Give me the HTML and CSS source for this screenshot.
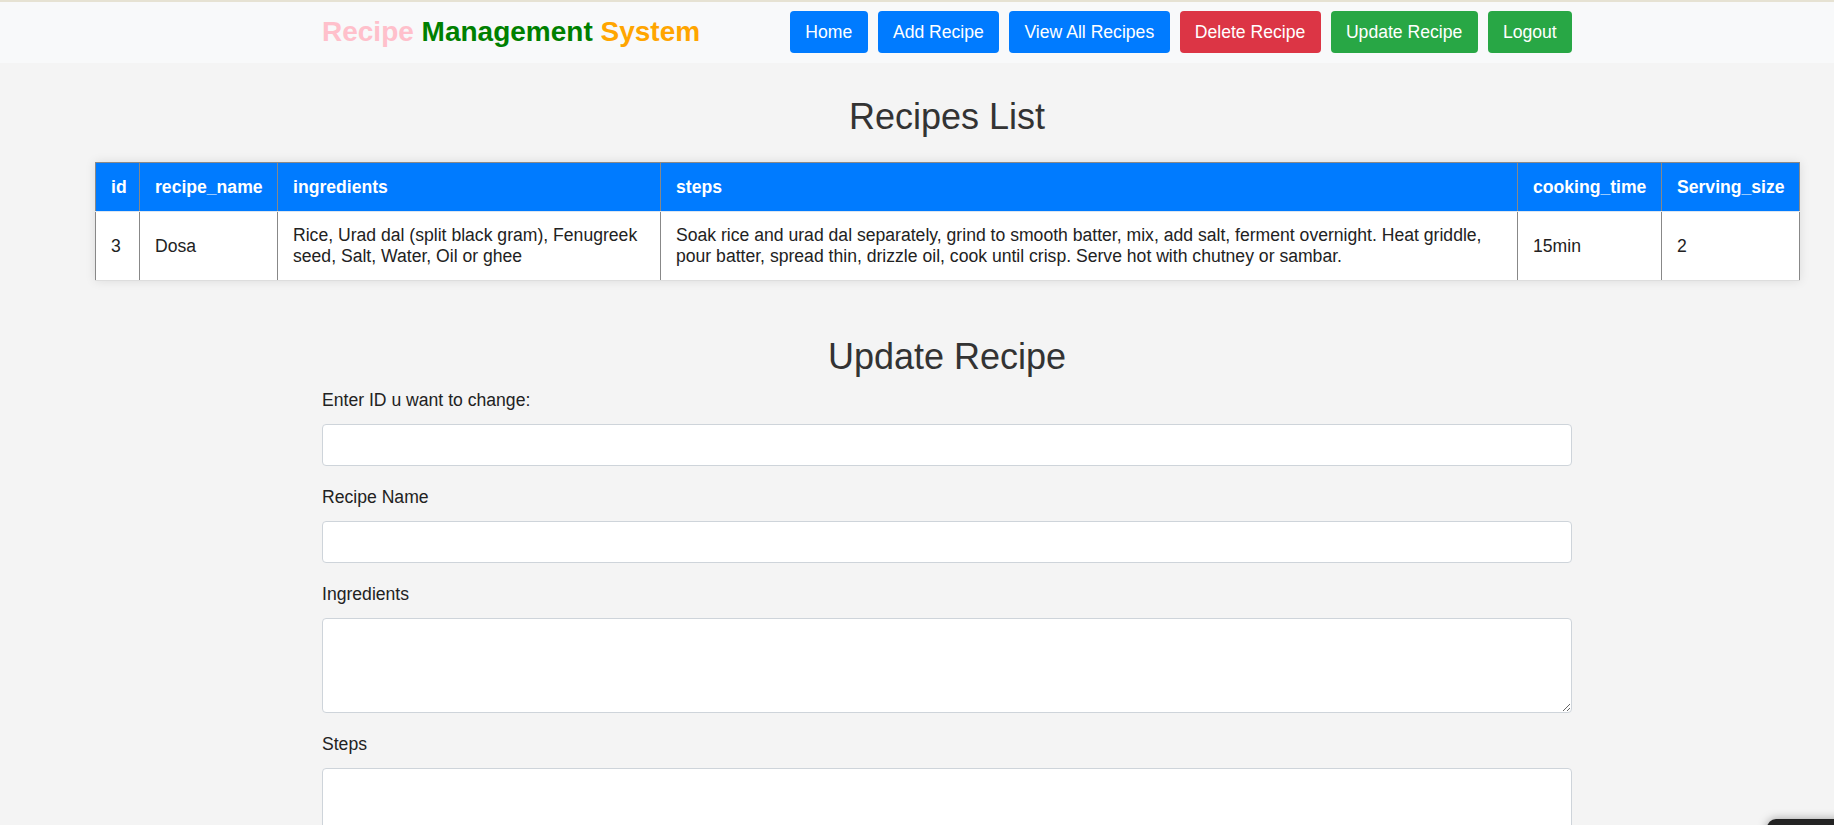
FILE: index.html
```html
<!DOCTYPE html>
<html lang="en">
<head>
<meta charset="utf-8">
<title>Update Recipe</title>
<link rel="stylesheet" href="styles.css">
</head>
<body>
<div class="page">
  <header class="topbar">
    <div class="container topbar-inner">
      <h3 class="brand"><span class="b-pink">Recipe</span> <span class="b-green">Management</span> <span class="b-orange">System</span></h3>
      <nav class="nav">
        <a class="btn btn-blue" href="#">Home</a>
        <a class="btn btn-blue" href="#">Add Recipe</a>
        <a class="btn btn-blue" href="#">View All Recipes</a>
        <a class="btn btn-red" href="#">Delete Recipe</a>
        <a class="btn btn-green" href="#">Update Recipe</a>
        <a class="btn btn-green" href="#">Logout</a>
      </nav>
    </div>
  </header>

  <h2 class="section-title first">Recipes List</h2>
  <table class="recipes">
    <colgroup>
      <col class="c-id"><col class="c-name"><col class="c-ing"><col class="c-steps"><col class="c-time"><col class="c-size">
    </colgroup>
    <thead>
      <tr><th>id</th><th>recipe_name</th><th>ingredients</th><th>steps</th><th>cooking_time</th><th>Serving_size</th></tr>
    </thead>
    <tbody>
      <tr>
        <td>3</td>
        <td>Dosa</td>
        <td>Rice, Urad dal (split black gram), Fenugreek seed, Salt, Water, Oil or ghee</td>
        <td>Soak rice and urad dal separately, grind to smooth batter, mix, add salt, ferment overnight. Heat griddle, pour batter, spread thin, drizzle oil, cook until crisp. Serve hot with chutney or sambar.</td>
        <td>15min</td>
        <td>2</td>
      </tr>
    </tbody>
  </table>

  <h2 class="section-title second">Update Recipe</h2>
  <form class="container form">
    <label class="lbl" for="rid">Enter ID u want to change:</label>
    <input class="field" id="rid" type="text">
    <label class="lbl" for="rname">Recipe Name</label>
    <input class="field" id="rname" type="text">
    <label class="lbl" for="ring">Ingredients</label>
    <textarea class="field area" id="ring"></textarea>
    <label class="lbl" for="rsteps">Steps</label>
    <textarea class="field area" id="rsteps"></textarea>
    <label class="lbl" for="rtime">Cooking Time</label>
    <input class="field" id="rtime" type="text">
    <label class="lbl" for="rsize">Serving Size</label>
    <input class="field" id="rsize" type="text">
    <button class="btn btn-green" type="button">Update Recipe</button>
  </form>
</div>
<div class="os-overlay"></div>
</body>
</html>
```

FILE: styles.css
```css
html {
  overflow: hidden;
}
body {
  margin: 0;
  background: #f4f4f4;
  font-family: "Liberation Sans", Arial, sans-serif;
  font-size: 17.6px;
  color: #333;
}
.page {
  width: 1894px;
}
.container {
  width: 1250px;
  margin: 0 auto;
}
.topbar {
  background: #f8f9fa;
  border-top: 2px solid #e6e2d3;
  padding: 9px 0 10px;
}
.topbar-inner {
  display: flex;
  justify-content: space-between;
  align-items: center;
}
.brand {
  margin: 0;
  font-size: 28px;
  font-weight: 700;
  line-height: 42px;
}
.b-pink { color: #ffc0cb; }
.b-green { color: #008000; }
.b-orange { color: #ffa500; }
.nav {
  display: flex;
  gap: 10px;
}
.btn {
  display: inline-block;
  padding: 8px 15.3px;
  font-family: inherit;
  font-size: 17.6px;
  line-height: 26px;
  color: #fff;
  text-decoration: none;
  border: 0;
  border-radius: 4px;
}
.btn-blue { background: #007bff; }
.btn-red { background: #dc3545; }
.btn-green { background: #28a745; }

.section-title {
  margin: 0;
  text-align: center;
  font-size: 36px;
  font-weight: 400;
  line-height: 43px;
  color: #333;
}
.section-title.first {
  margin-top: 32px;
  margin-bottom: 24px;
}
.section-title.second {
  margin-top: 54px;
  margin-bottom: 9px;
}

.recipes {
  width: 1704px;
  margin-left: 95px;
  border-collapse: collapse;
  table-layout: fixed;
  background: #fff;
  box-shadow: 0 0 10px rgba(0, 0, 0, 0.1);
  border-top: 1px solid #888;
}
.c-id { width: 44px; }
.c-name { width: 138px; }
.c-ing { width: 383px; }
.c-steps { width: 857px; }
.c-time { width: 144px; }
.c-size { width: 138px; }
.recipes th,
.recipes td {
  text-align: left;
  vertical-align: middle;
  border-left: 1px solid #888;
  border-right: 1px solid #888;
}
.recipes th {
  padding: 13.5px 14px 13.5px 15px;
  background: #007bff;
  color: #fff;
  font-weight: 700;
  border-bottom: 1px solid #dde6f0;
}
.recipes td {
  padding: 13px 14px 13px 15px;
  color: #222;
  border-bottom: 1px solid #ddd;
}

.form {
  display: flex;
  flex-direction: column;
  padding-bottom: 40px;
}
.lbl {
  display: block;
  line-height: 26.5px;
  margin-bottom: 10px;
  color: #222;
}
.field {
  box-sizing: border-box;
  height: 42px;
  margin-bottom: 18.5px;
  padding: 6px 12px;
  font-family: inherit;
  font-size: 17.6px;
  border: 1px solid #ced4da;
  border-radius: 4px;
  background: #fff;
}
.area {
  height: 95px;
}
.form .btn {
  align-self: flex-start;
}
.os-overlay {
  position: fixed;
  left: 1767px;
  top: 819px;
  width: 120px;
  height: 40px;
  background: #232323;
  border-radius: 9px;
  box-shadow: 0 0 10px rgba(0, 0, 0, 0.35);
}
```
